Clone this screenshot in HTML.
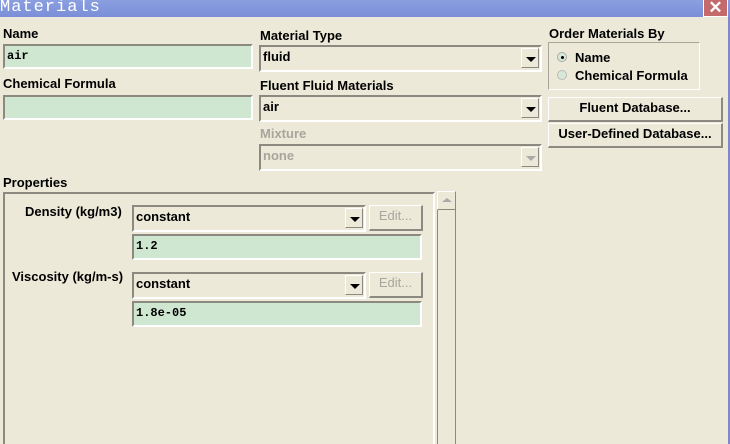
<!DOCTYPE html>
<html><head><style>
*{box-sizing:border-box;margin:0;padding:0}
html,body{width:730px;height:444px;overflow:hidden}
body{background:#ece9d8;position:relative;font-family:"Liberation Sans",sans-serif;font-size:13px;font-weight:bold;color:#000}
.a{position:absolute}
.title{left:0;top:0;width:730px;height:17px;background:linear-gradient(#8a9ee0,#7b8fd8);color:#fff;font-family:"Liberation Mono",monospace;font-size:17px;font-weight:normal;line-height:16px;letter-spacing:1px;overflow:hidden}
.close{left:703px;top:0;width:25px;height:17px;background:#c46a6a;border:1px solid #fff;border-top:none;color:#fff;font-size:17px;text-align:center;line-height:15px;font-weight:bold}
.rb{left:728px;top:17px;width:2px;height:427px;background:#8088c8}
.lbl{line-height:14px}
.sunk{border-top:2px solid #8c8a80;border-left:2px solid #8c8a80;border-bottom:2px solid #fff;border-right:2px solid #fff;padding-left:2px;line-height:20px}
.g{background:#cfe6d0;font-family:"Liberation Mono",monospace;font-size:12px}
.c{background:#ece9d8}
.arr{position:absolute;right:1px;top:1px;width:18px;height:20px;border:1px solid #fff;border-right-color:#8c8a80;border-bottom-color:#8c8a80;background:#ece9d8}
.arr:after{content:"";position:absolute;left:4px;top:8px;border-left:5px solid transparent;border-right:5px solid transparent;border-top:5px solid #000}
.arr.d:after{border-top-color:#aaa}
.btn{border:1px solid #fff;border-right:2px solid #8c8a80;border-bottom:2px solid #8c8a80;background:#ece9d8;text-align:center;line-height:20px}
.gray{color:#a8a69c}
</style></head><body>
<div class="a title">Materials</div>
<div class="a close">✕</div>
<div class="a rb"></div>

<div class="a lbl" style="left:3px;top:27px">Name</div>
<div class="a sunk g" style="left:3px;top:44px;width:250px;height:25px">air</div>
<div class="a lbl" style="left:3px;top:77px">Chemical Formula</div>
<div class="a sunk g" style="left:3px;top:95px;width:250px;height:25px"></div>

<div class="a lbl" style="left:260px;top:29px">Material Type</div>
<div class="a sunk c" style="left:259px;top:45px;width:283px;height:27px">fluid<div class="arr"></div></div>
<div class="a lbl" style="left:260px;top:79px">Fluent Fluid Materials</div>
<div class="a sunk c" style="left:259px;top:95px;width:283px;height:27px">air<div class="arr"></div></div>
<div class="a lbl gray" style="left:260px;top:127px">Mixture</div>
<div class="a sunk c gray" style="left:259px;top:144px;width:283px;height:27px">none<div class="arr d"></div></div>

<div class="a lbl" style="left:549px;top:27px">Order Materials By</div>
<div class="a" style="left:548px;top:42px;width:152px;height:48px;border:1px solid #a8a69c;border-right-color:#fff;border-bottom-color:#fff"></div>
<div class="a" style="left:557px;top:52px;width:10px;height:10px;border-radius:50%;background:#d8e8d8;border:1px solid #aaa"><div style="position:absolute;left:3px;top:3px;width:3px;height:3px;background:#000;border-radius:50%"></div></div>
<div class="a lbl" style="left:575px;top:51px">Name</div>
<div class="a" style="left:557px;top:70px;width:10px;height:10px;border-radius:50%;background:#d8e8d8;border:1px solid #bbb"></div>
<div class="a lbl" style="left:575px;top:69px">Chemical Formula</div>
<div class="a btn" style="left:548px;top:97px;width:175px;height:25px">Fluent Database...</div>
<div class="a btn" style="left:548px;top:123px;width:175px;height:25px">User-Defined Database...</div>

<div class="a lbl" style="left:3px;top:176px">Properties</div>
<div class="a" style="left:3px;top:192px;width:432px;height:260px;border-top:2px solid #8c8a80;border-left:2px solid #8c8a80;border-right:2px solid #fff"></div>
<div class="a" style="left:437px;top:191px;width:19px;height:260px;border-left:1px solid #8c8a80;border-right:1px solid #8c8a80;background:#ece9d8"></div>
<div class="a" style="left:437px;top:191px;width:19px;height:19px;border:1px solid #fff;border-right-color:#8c8a80;border-bottom-color:#8c8a80"><div style="position:absolute;left:4px;top:6px;border-left:5px solid transparent;border-right:5px solid transparent;border-bottom:4px solid #aaa"></div></div>

<div class="a lbl" style="left:25px;top:205px">Density (kg/m3)</div>
<div class="a sunk c" style="left:132px;top:205px;width:234px;height:27px">constant<div class="arr"></div></div>
<div class="a btn gray" style="left:369px;top:205px;width:54px;height:26px;font-weight:normal">Edit...</div>
<div class="a sunk g" style="left:132px;top:234px;width:290px;height:26px">1.2</div>

<div class="a lbl" style="left:12px;top:270px">Viscosity (kg/m-s)</div>
<div class="a sunk c" style="left:132px;top:272px;width:234px;height:27px">constant<div class="arr"></div></div>
<div class="a btn gray" style="left:369px;top:272px;width:54px;height:26px;font-weight:normal">Edit...</div>
<div class="a sunk g" style="left:132px;top:301px;width:290px;height:26px">1.8e-05</div>
</body></html>
